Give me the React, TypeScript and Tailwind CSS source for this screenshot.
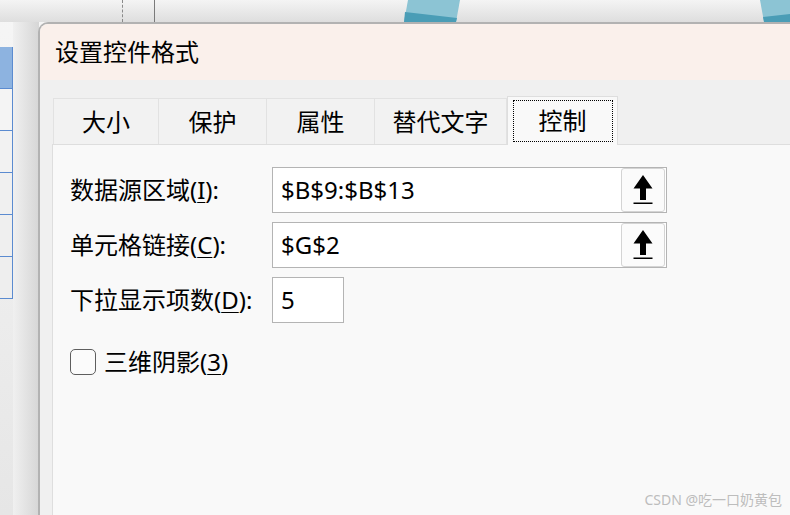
const font = "font-['Segoe_UI','Noto_Sans','Noto_Sans_CJK_SC',sans-serif]"

function UpArrowButton() {
  return (
    <div className="my-px mr-px flex h-[44px] w-[44px] shrink-0 items-center justify-center rounded-[3px] border border-[#d4d4d4] bg-[#fbfbfb]">
      <svg width="20" height="30" viewBox="0 0 20 30" className="shrink-0">
        <path d="M10 0 L19.5 13.5 L13 13.5 L13 25 L7 25 L7 13.5 L0.5 13.5 Z" fill="#000" />
        <rect x="0.5" y="27.5" width="19" height="1.5" fill="#000" />
      </svg>
    </div>
  )
}

function Label({ text, hot, tail = "):" }: { text: string; hot: string; tail?: string }) {
  return (
    <span className="whitespace-nowrap">
      {text}(<u className="underline-offset-[3px] decoration-1">{hot}</u>{tail}
    </span>
  )
}

function Tab({ label, w, active }: { label: string; w: string; active?: boolean }) {
  if (active) {
    return (
      <div className={`relative z-10 -mb-px flex h-[49px] items-center justify-center border border-b-0 border-[#dedede] bg-[#f9f9f9] ${w}`}>
        <div className="flex h-[42px] w-[100px] items-center justify-center border border-dotted border-black">
          {label}
        </div>
      </div>
    )
  }
  return (
    <div className={`flex h-[46px] items-center justify-center border-t border-r border-[#e2e2e2] bg-[#f2f2f2] first:border-l ${w}`}>
      {label}
    </div>
  )
}

export default function App() {
  return (
    <div className={`relative h-[515px] w-[790px] overflow-hidden bg-gradient-to-b from-[#f6f6f6] to-[#e6e6e6] text-black ${font}`}>
      {/* background sheet behind the dialog */}
      <div className="absolute left-0 top-0 h-[22px] w-full bg-gradient-to-b from-[#f4f4f4] to-[#dedede]" />
      <div className="absolute left-[122px] top-0 h-[22px] border-l border-dashed border-[#8a8a8a]" />
      <div className="absolute left-[154px] top-0 h-[22px] w-px bg-[#7a7a7a]" />
      <svg className="absolute left-[400px] top-0" width="64" height="22" viewBox="0 0 64 22">
        <polygon points="8,0 60,0 56,22 4,22" fill="#8cc4d4" />
        <polygon points="5,12 57,18 56,22 4,22" fill="#4a9db6" />
      </svg>
      <svg className="absolute left-[758px] top-0" width="32" height="22" viewBox="0 0 32 22">
        <polygon points="2,0 32,0 32,22 6,22" fill="#8cc4d4" />
        <polygon points="5,17 32,14 32,22 6,22" fill="#4a9db6" />
      </svg>
      <div className="absolute left-0 top-[47px] w-[13px] border-r border-[#5b8bd0]">
        <div className="h-[42px] border-b border-[#5b8bd0] bg-[#8db3e0]" />
        <div className="h-[42px] border-b border-[#5b8bd0] bg-[#f4f4f4]" />
        <div className="h-[42px] border-b border-[#5b8bd0] bg-[#f2f2f2]" />
        <div className="h-[42px] border-b border-[#5b8bd0] bg-[#f0f0f0]" />
        <div className="h-[42px] border-b border-[#5b8bd0] bg-[#efefef]" />
        <div className="h-[42px] border-b border-[#5b8bd0] bg-[#eeeeee]" />
      </div>
      <div className="absolute left-[13px] top-[22px] h-[493px] w-[26px] bg-gradient-to-r from-[#f0f0f0] to-[#d6d6d6]" />

      {/* dialog */}
      <div className="relative ml-[38px] mt-[22px] flex h-[493px] flex-col overflow-hidden rounded-tl-[10px] border-l-2 border-t-2 border-[#b2b2b2] bg-[#f0f0f0]">
        <div className="flex h-[56px] shrink-0 items-center bg-[#faf0eb] pl-[15px] text-[24px] leading-none">
          设置控件格式
        </div>
        <div className="flex items-end pl-[13px] pt-[16px] text-[24px] leading-none">
          <Tab label="大小" w="w-[106px]" />
          <Tab label="保护" w="w-[108px]" />
          <Tab label="属性" w="w-[108px]" />
          <Tab label="替代文字" w="w-[132px]" />
          <Tab label="控制" w="w-[111px]" active />
        </div>
        <div className="ml-[12px] flex-1 border-l border-t border-[#dedede] bg-[#f9f9f9] pl-[17px] pt-[22px] text-[24px] leading-none">
          <div className="grid grid-cols-[202px_auto] items-center gap-y-[9px] justify-start">
            <Label text="数据源区域" hot="I" />
            <div className="flex h-[46px] w-[395px] items-center justify-between border border-[#b4b4b4] bg-white">
              <span className="pl-[8px]">$B$9:$B$13</span>
              <UpArrowButton />
            </div>
            <Label text="单元格链接" hot="C" />
            <div className="flex h-[46px] w-[395px] items-center justify-between border border-[#b4b4b4] bg-white">
              <span className="pl-[8px]">$G$2</span>
              <UpArrowButton />
            </div>
            <Label text="下拉显示项数" hot="D" />
            <div className="flex h-[46px] w-[72px] items-center border border-[#b4b4b4] bg-white pl-[8px]">5</div>
          </div>
          <div className="mt-[26px] flex items-center gap-[8px]">
            <div className="h-[26px] w-[26px] rounded-[5px] border-[1.5px] border-[#5e5e5e] bg-[#fbfbfb]" />
            <Label text="三维阴影" hot="3" tail=")" />
          </div>
        </div>
      </div>

      <div className="absolute bottom-[8px] right-[8px] text-[14px] leading-none text-[#bdbdbd]">
        CSDN @吃一口奶黄包
      </div>
    </div>
  )
}
